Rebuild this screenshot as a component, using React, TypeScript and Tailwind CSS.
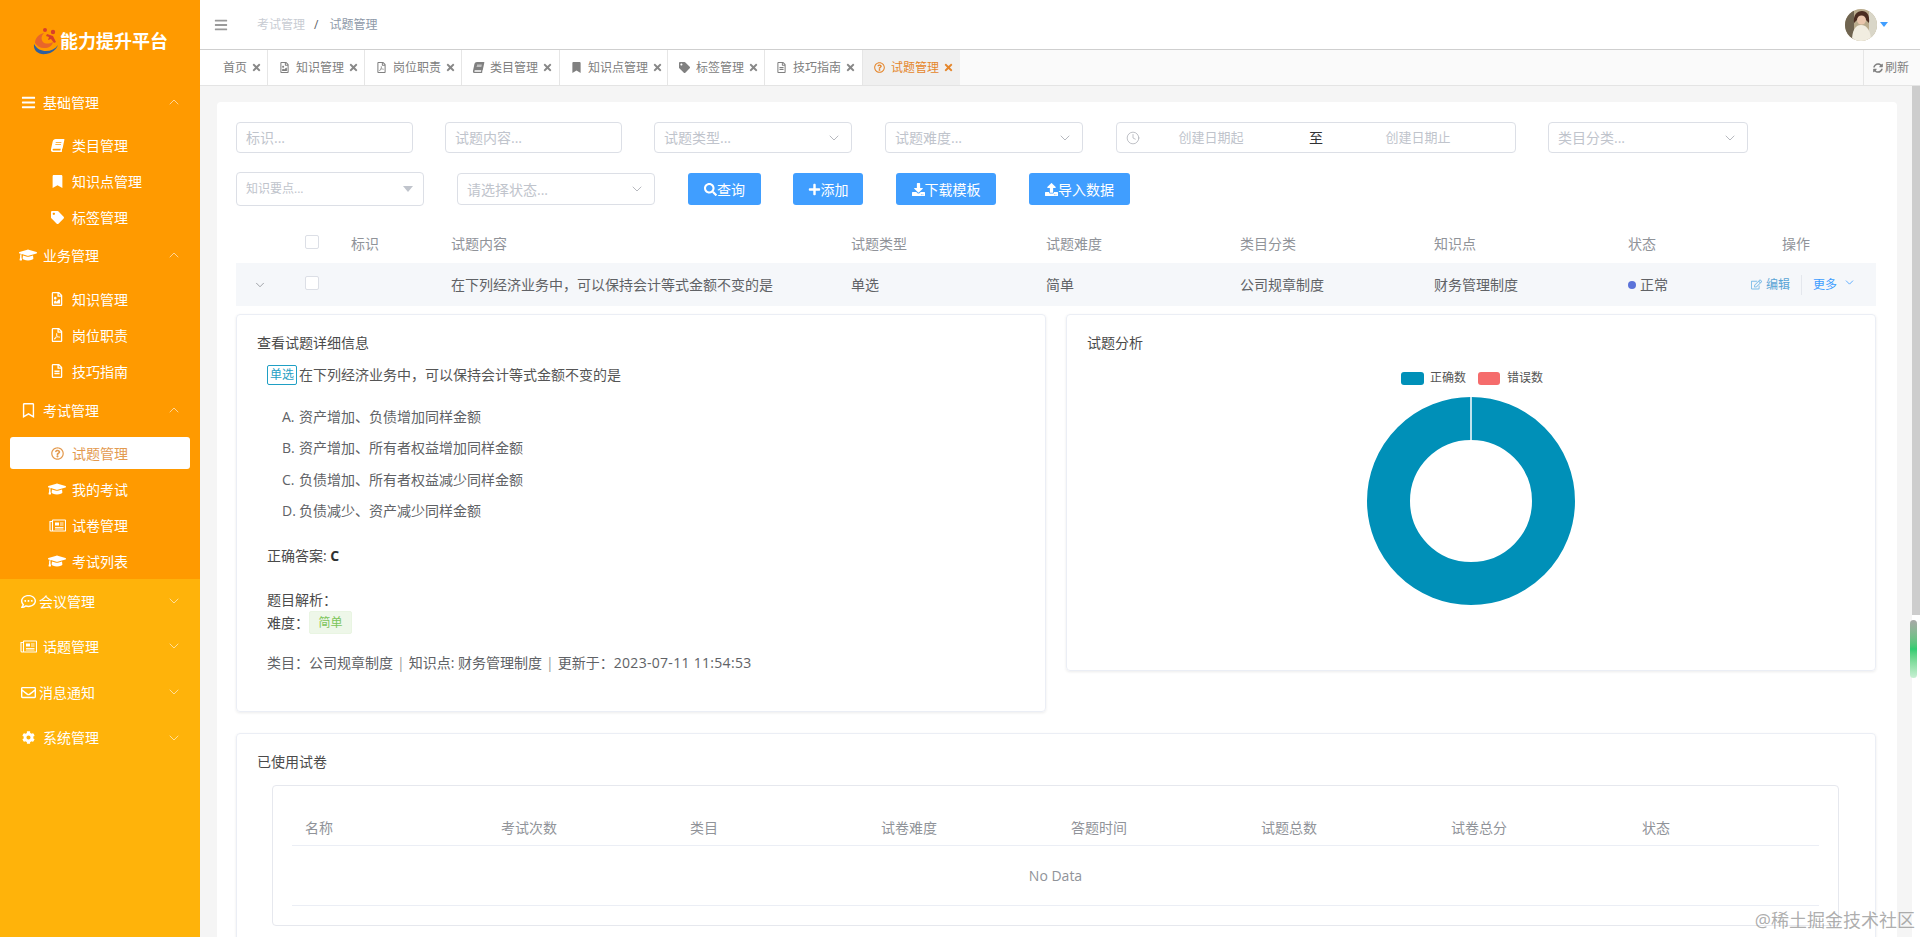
import type { ReactNode } from 'react';
import { ChevronDown, ChevronUp, Clock } from 'lucide-react';
import {
  FaBars,
  FaBook,
  FaBookmark,
  FaCog,
  FaDownload,
  FaGraduationCap,
  FaPlus,
  FaRegBookmark,
  FaRegCommentDots,
  FaRegEdit,
  FaRegEnvelope,
  FaRegFileAlt,
  FaRegFileImage,
  FaRegFilePdf,
  FaRegQuestionCircle,
  FaSearch,
  FaSyncAlt,
  FaTag,
  FaTimes,
  FaUpload,
} from 'react-icons/fa';

function PaperIcon() {
  return (
    <svg width="17" height="13" viewBox="0 0 17 13" fill="none" stroke="currentColor" strokeWidth="1.1">
      <rect x="3.5" y="1" width="13" height="11" rx="0.5" />
      <path d="M3.5 2.5H1v8.5a1 1 0 0 0 1 1h1.5" />
      <rect x="6" y="3.5" width="4" height="3" fill="currentColor" stroke="none" />
      <path d="M11 4h3.5M11 6h3.5M6 8.5h8.5M6 10h8.5" strokeWidth="0.9" />
    </svg>
  );
}

const SlantBook = () => <FaBook className="-skew-x-12" />;

const TABS = [
  { label: '首页', width: 'w-[68px]', pad: 'pl-[23px]' },
  { label: '知识管理', icon: <FaRegFileImage />, width: 'w-[97px]', pad: 'pl-[11px]' },
  { label: '岗位职责', icon: <FaRegFilePdf />, width: 'w-[97px]', pad: 'pl-[11px]' },
  { label: '类目管理', icon: <SlantBook />, width: 'w-[98px]', pad: 'pl-[11px]' },
  { label: '知识点管理', icon: <FaBookmark />, width: 'w-[108px]', pad: 'pl-[11px]' },
  { label: '标签管理', icon: <FaTag />, width: 'w-[97px]', pad: 'pl-[11px]' },
  { label: '技巧指南', icon: <FaRegFileAlt />, width: 'w-[98px]', pad: 'pl-[11px]' },
];

const PAPER_COLUMNS = [
  { label: '名称', width: 'w-[196px]' },
  { label: '考试次数', width: 'w-[189px]' },
  { label: '类目', width: 'w-[191px]' },
  { label: '试卷难度', width: 'w-[190px]' },
  { label: '答题时间', width: 'w-[190px]' },
  { label: '试题总数', width: 'w-[190px]' },
  { label: '试卷总分', width: 'w-[191px]' },
  { label: '状态', width: 'w-[150px]' },
];

function GroupHeader({ icon, label, open, tight }: { icon: ReactNode; label: string; open?: boolean; tight?: boolean }) {
  return (
    <div className="flex h-full items-center pl-[19px] pr-[18px] text-[14px] text-white">
      <span className="flex w-[18px] justify-center text-[15px]">{icon}</span>
      <span className={tight ? 'ml-[2px]' : 'ml-[6px]'}>{label}</span>
      {open ? (
        <ChevronUp className="ml-auto h-4 w-4 text-white/70" strokeWidth={1.25} />
      ) : (
        <ChevronDown className="ml-auto h-4 w-4 text-white/70" strokeWidth={1.25} />
      )}
    </div>
  );
}

function SubItem({ icon, label, active }: { icon: ReactNode; label: string; active?: boolean }) {
  return (
    <div className="flex h-[36px] items-center">
      <div
        className={`mx-[10px] flex h-[32px] w-[180px] items-center rounded-[3px] pl-[38px] text-[14px] ${
          active ? 'bg-white text-[#e39a4f]' : 'text-white'
        }`}
      >
        <span className="flex w-[18px] justify-center text-[13px]">{icon}</span>
        <span className="ml-[6px]">{label}</span>
      </div>
    </div>
  );
}

function Logo() {
  return (
    <svg width="26" height="28" viewBox="0 0 26 28" className="shrink-0">
      <path d="M1 17c-1 7 5 11 12 10 6-1 10-4 12-9-3 4-7 6-12 6-5 0-9-2-12-7z" fill="#2f5f9e" />
      <path d="M2 16c0-5 4-9 9-10-3 3-3 6-1 9 2 2 6 2 10 0-1 4-4 6-9 6-4 0-7-2-9-5z" fill="#e8662a" />
      <circle cx="12" cy="3" r="2" fill="#d8402a" />
      <circle cx="20" cy="5" r="2.2" fill="#d8402a" />
      <path d="M14 7l6 2 3 6-2 1-3-4-3 1 1-3-3-1z" fill="#d8402a" />
    </svg>
  );
}

function Sidebar() {
  const cap = <FaGraduationCap className="text-[18px]" />;

  return (
    <aside className="flex h-full w-[200px] shrink-0 flex-col bg-[#ffb30a]">
      <div className="h-[579px] bg-[#ff9a00]">
        <div className="flex h-[82px] items-center pl-[33px]">
          <Logo />
          <span className="ml-[1px] text-[18px] font-bold text-white">能力提升平台</span>
        </div>
        <div className="h-[40px]">
          <GroupHeader icon={<FaBars />} label="基础管理" open />
        </div>
        <div className="mt-[5px]">
          <SubItem icon={<SlantBook />} label="类目管理" />
          <SubItem icon={<FaBookmark />} label="知识点管理" />
          <SubItem icon={<FaTag />} label="标签管理" />
        </div>
        <div className="h-[40px]">
          <GroupHeader icon={<FaGraduationCap className="text-[18px]" />} label="业务管理" open />
        </div>
        <div className="mt-[6px]">
          <SubItem icon={<FaRegFileImage className="text-[14px]" />} label="知识管理" />
          <SubItem icon={<FaRegFilePdf className="text-[14px]" />} label="岗位职责" />
          <SubItem icon={<FaRegFileAlt className="text-[14px]" />} label="技巧指南" />
        </div>
        <div className="mt-px h-[40px]">
          <GroupHeader icon={<FaRegBookmark />} label="考试管理" open />
        </div>
        <div className="mt-[5px]">
          <SubItem icon={<FaRegQuestionCircle />} label="试题管理" active />
          <SubItem icon={cap} label="我的考试" />
          <SubItem icon={<PaperIcon />} label="试卷管理" />
          <SubItem icon={cap} label="考试列表" />
        </div>
      </div>
      <div className="h-[44px]">
        <GroupHeader icon={<FaRegCommentDots />} label="会议管理" tight />
      </div>
      <div className="h-[46px]">
        <GroupHeader icon={<PaperIcon />} label="话题管理" />
      </div>
      <div className="h-[46px]">
        <GroupHeader icon={<FaRegEnvelope />} label="消息通知" tight />
      </div>
      <div className="h-[45px]">
        <GroupHeader icon={<FaCog className="text-[13px]" />} label="系统管理" />
      </div>
    </aside>
  );
}

function Avatar() {
  return (
    <svg width="32" height="32" viewBox="0 0 32 32" className="rounded-full">
      <rect width="32" height="32" fill="#b9ab8c" />
      <rect x="0" y="0" width="9" height="32" fill="#6f6450" />
      <rect x="24" y="0" width="8" height="32" fill="#d9d6c8" />
      <path d="M9 14c-1-8 3-12 8-12s8 4 7 12l-3-3h-9z" fill="#4a2c20" />
      <circle cx="16.5" cy="11" r="4.5" fill="#e9c6ac" />
      <path d="M7 32c0-10 3-16 9-16s10 6 10 16z" fill="#f1ede0" />
    </svg>
  );
}

function TopBar() {
  return (
    <div className="flex h-[50px] shrink-0 items-center border-b border-[#cfcfcf] bg-white pl-[14px] pr-[32px]">
      <FaBars className="text-[14px] text-[#9a9a9a]" />
      <span className="ml-[29px] text-[12px] text-[#c8ccd3]">考试管理</span>
      <span className="ml-[9px] text-[12px] text-[#606266]">/</span>
      <span className="ml-[11px] text-[12px] text-[#8e99a8]">试题管理</span>
      <div className="ml-auto flex items-center">
        <Avatar />
        <span className="ml-[3px] h-0 w-0 border-x-[4px] border-t-[5px] border-x-transparent border-t-[#409eff]" />
      </div>
    </div>
  );
}

function TabBar() {
  return (
    <div className="flex h-[36px] shrink-0 items-stretch border-b border-[#e4e4e4] bg-[#fafafa] text-[12px] text-[#808080]">
      {TABS.map((tab) => (
        <div key={tab.label} className={`flex items-center border-r border-[#e6e6e6] bg-white ${tab.width} ${tab.pad}`}>
          {tab.icon && <span className="mr-[6px] text-[11px]">{tab.icon}</span>}
          <span>{tab.label}</span>
          <FaTimes className="ml-[4px] text-[11px] text-[#888888]" />
        </div>
      ))}
      <div className="flex w-[97px] items-center bg-[#f0f0f0] pl-[11px] text-[#e5862b]">
        <FaRegQuestionCircle className="mr-[6px] text-[11px]" />
        <span>试题管理</span>
        <FaTimes className="ml-[4px] text-[11px]" />
      </div>
      <div className="ml-auto flex w-[57px] items-center border-l border-[#e6e6e6] pl-[9px]">
        <FaSyncAlt className="mr-[2px] text-[10px]" />
        <span>刷新</span>
      </div>
    </div>
  );
}

function TextInput({ placeholder, width }: { placeholder: string; width: string }) {
  return (
    <div className={`flex h-[31px] items-center rounded-[4px] border border-[#dcdfe6] bg-white pl-[9px] text-[14px] text-[#c0c4cc] ${width}`}>
      {placeholder}
    </div>
  );
}

function SelectInput({ placeholder, width }: { placeholder: string; width: string }) {
  return (
    <div className={`flex h-[31px] items-center justify-between rounded-[4px] border border-[#dcdfe6] bg-white pl-[9px] pr-[9px] text-[14px] text-[#c0c4cc] ${width}`}>
      <span>{placeholder}</span>
      <ChevronDown className="h-4 w-4 text-[#a8abb2]" strokeWidth={1.25} />
    </div>
  );
}

function ActionButton({ icon, label, width }: { icon: ReactNode; label: string; width: string }) {
  return (
    <button className={`flex h-[32px] items-center justify-center rounded-[3px] bg-[#409eff] text-[14px] text-white ${width}`}>
      <span className="text-[13px]">{icon}</span>
      {label}
    </button>
  );
}

function Filters() {
  return (
    <>
      <div className="flex items-center">
        <TextInput placeholder="标识..." width="w-[177px]" />
        <div className="ml-[32px]">
          <TextInput placeholder="试题内容..." width="w-[177px]" />
        </div>
        <div className="ml-[32px]">
          <SelectInput placeholder="试题类型..." width="w-[198px]" />
        </div>
        <div className="ml-[33px]">
          <SelectInput placeholder="试题难度..." width="w-[198px]" />
        </div>
        <div className="ml-[33px] flex h-[31px] w-[400px] items-center rounded-[4px] border border-[#dcdfe6] pl-[9px] text-[13px] text-[#c0c4cc]">
          <Clock className="h-[14px] w-[14px] text-[#a8abb2]" strokeWidth={1.25} />
          <span className="ml-[6px] w-[130px] text-center">创建日期起</span>
          <span className="w-[80px] text-center text-[14px] text-[#303133]">至</span>
          <span className="w-[124px] text-center">创建日期止</span>
        </div>
        <div className="ml-[32px]">
          <SelectInput placeholder="类目分类..." width="w-[200px]" />
        </div>
      </div>
      <div className="mt-[19px] flex h-[34px] items-center">
        <div className="flex h-[34px] w-[188px] items-center justify-between rounded-[4px] border border-[#dcdfe6] pl-[9px] pr-[10px] text-[12px] text-[#c0c4cc]">
          <span>知识要点...</span>
          <span className="h-0 w-0 border-x-[5px] border-t-[6px] border-x-transparent border-t-[#c0c4cc]" />
        </div>
        <div className="ml-[33px]">
          <SelectInput placeholder="请选择状态..." width="w-[198px] h-[32px]" />
        </div>
        <div className="ml-[33px]">
          <ActionButton icon={<FaSearch />} label="查询" width="w-[73px]" />
        </div>
        <div className="ml-[32px]">
          <ActionButton icon={<FaPlus />} label="添加" width="w-[70px]" />
        </div>
        <div className="ml-[33px]">
          <ActionButton icon={<FaDownload />} label="下载模板" width="w-[100px]" />
        </div>
        <div className="ml-[33px]">
          <ActionButton icon={<FaUpload />} label="导入数据" width="w-[101px]" />
        </div>
      </div>
    </>
  );
}

function Checkbox() {
  return <span className="block h-[14px] w-[14px] rounded-[2px] border border-[#dcdfe6] bg-white" />;
}

function QuestionTable() {
  return (
    <div className="mt-[18px] w-[1640px] text-[14px]">
      <div className="flex h-[39px] items-center text-[#909399]">
        <span className="w-[68px]" />
        <span className="w-[47px] pb-[4px] pl-[1px]">
          <Checkbox />
        </span>
        <span className="w-[100px]">标识</span>
        <span className="w-[400px]">试题内容</span>
        <span className="w-[195px]">试题类型</span>
        <span className="w-[194px]">试题难度</span>
        <span className="w-[194px]">类目分类</span>
        <span className="w-[194px]">知识点</span>
        <span className="w-[88px]">状态</span>
        <span className="w-[160px] text-center">操作</span>
      </div>
      <div className="flex h-[43px] items-center bg-[#f5f7fa] text-[#606266]">
        <span className="w-[68px] pl-[17px]">
          <ChevronDown className="h-[14px] w-[14px] text-[#808389]" strokeWidth={1.25} />
        </span>
        <span className="w-[47px] pb-[3px] pl-[1px]">
          <Checkbox />
        </span>
        <span className="w-[100px]" />
        <span className="w-[400px]">在下列经济业务中，可以保持会计等式金额不变的是</span>
        <span className="w-[195px]">单选</span>
        <span className="w-[194px]">简单</span>
        <span className="w-[194px]">公司规章制度</span>
        <span className="w-[194px]">财务管理制度</span>
        <span className="flex w-[88px] items-center">
          <span className="h-[8px] w-[8px] rounded-full bg-[#5b73d9]" />
          <span className="ml-[4px]">正常</span>
        </span>
        <span className="flex items-center pl-[35px] text-[12px] text-[#409eff]">
          <FaRegEdit className="text-[11px] text-[#7fbde8]" />
          <span className="ml-[4px] text-[#5aa5d6]">编辑</span>
          <span className="mx-[11px] h-[20px] w-px bg-[#e4e7ed]" />
          <span>更多</span>
          <ChevronDown className="ml-[6px] h-[13px] w-[13px] -translate-y-[2px]" strokeWidth={1.5} />
        </span>
      </div>
    </div>
  );
}

function QuestionDetail() {
  const options = [
    ['A.', '资产增加、负债增加同样金额'],
    ['B.', '资产增加、所有者权益增加同样金额'],
    ['C.', '负债增加、所有者权益减少同样金额'],
    ['D.', '负债减少、资产减少同样金额'],
  ];

  return (
    <div className="h-[398px] w-[810px] rounded-[4px] border border-[#ebeef5] pt-[18px] text-[14px] leading-[20px] text-[#606266] shadow-[0_1px_3px_rgba(0,0,0,0.08)]">
      <div className="pl-[20px] text-[#4a4a4a]">查看试题详细信息</div>
      <div className="pl-[30px]">
        <div className="mt-[12px] flex h-[20px] items-center">
          <span className="flex h-[20px] w-[30px] items-center justify-center rounded-[2px] border border-[#1f9fc4] text-[12px] text-[#1f9fc4]">单选</span>
          <span className="ml-[2px] text-[#555555]">在下列经济业务中，可以保持会计等式金额不变的是</span>
        </div>
        <div className="mt-[16px] pl-[15px]">
          {options.map(([key, text]) => (
            <div key={key} className="flex h-[31.5px] items-center">
              <span className="w-[17px]">{key}</span>
              <span>{text}</span>
            </div>
          ))}
        </div>
        <div className="mt-[19px] text-[#4a4a4a]">
          正确答案: <b className="font-bold text-[#303133]">C</b>
        </div>
        <div className="mt-[24px] text-[#4a4a4a]">题目解析：</div>
        <div className="mt-px flex h-[23px] items-center text-[#4a4a4a]">
          <span>难度：</span>
          <span className="flex h-[23px] w-[43px] items-center justify-center rounded-[2px] border border-[#e9f5e2] bg-[#eef7e9] text-[12px] text-[#7cc55a]">简单</span>
        </div>
        <div className="mt-[19px] whitespace-pre">
          类目：公司规章制度<span className="mx-[4px] text-[#999999]">|</span>知识点: 财务管理制度<span className="mx-[4px] text-[#999999]">|</span>更新于：<span className="tracking-[0.3px]">2023-07-11 11:54:53</span>
        </div>
      </div>
    </div>
  );
}

function QuestionChart() {
  return (
    <div className="h-[357px] w-[810px] rounded-[4px] border border-[#ebeef5] pt-[18px] text-[14px] leading-[20px] text-[#4a4a4a] shadow-[0_1px_3px_rgba(0,0,0,0.08)]">
      <div className="pl-[20px]">试题分析</div>
      <div className="mt-[15px] flex h-[20px] items-center pl-[334px] text-[12px] text-[#555555]">
        <span className="h-[13px] w-[23px] rounded-[3px] bg-[#0090b8]" />
        <span className="ml-[6px]">正确数</span>
        <span className="ml-[12px] h-[13px] w-[22px] rounded-[3px] bg-[#f56c6c]" />
        <span className="ml-[7px]">错误数</span>
      </div>
      <div className="mt-[8px] pl-[299px]">
        <svg width="210" height="210" viewBox="0 0 210 210" className="block">
          <circle cx="105" cy="105" r="82.5" fill="none" stroke="#0090b8" strokeWidth="43" />
          <line x1="105" y1="0" x2="105" y2="44" stroke="#ffffff" strokeWidth="1.5" />
        </svg>
      </div>
    </div>
  );
}

function UsedPapers() {
  return (
    <div className="mt-[21px] w-[1640px] rounded-[4px] border border-[#ebeef5] pb-[30px] pt-[18px] text-[14px] shadow-[0_1px_3px_rgba(0,0,0,0.08)]">
      <div className="pl-[20px] leading-[20px] text-[#4a4a4a]">已使用试卷</div>
      <div className="ml-[35px] mt-[13px] h-[141px] w-[1567px] rounded-[4px] border border-[#e6e8ee] px-[19px] pt-[23px]">
        <div className="flex h-[37px] items-center border-b border-[#ebeef5] pl-[13px] text-[#909399]">
          {PAPER_COLUMNS.map((col) => (
            <span key={col.label} className={col.width}>{col.label}</span>
          ))}
        </div>
        <div className="flex h-[60px] items-center justify-center border-b border-[#ebeef5] text-[#909399]">No Data</div>
      </div>
    </div>
  );
}

export default function App() {
  return (
    <div className="relative flex h-[937px] w-[1920px] overflow-hidden bg-white font-['Open_Sans','Noto_Sans_CJK_SC',sans-serif]">
      <Sidebar />
      <div className="flex min-w-0 flex-1 flex-col">
        <TopBar />
        <TabBar />
        <main className="min-h-0 flex-1 overflow-hidden bg-[#f5f5f5] pl-[17px] pt-[16px]">
          <div className="w-[1680px] rounded-[4px] bg-white pl-[19px] pt-[20px]">
            <Filters />
            <QuestionTable />
            <div className="mt-[8px] flex items-start gap-[20px]">
              <QuestionDetail />
              <QuestionChart />
            </div>
            <UsedPapers />
          </div>
        </main>
      </div>
      {/* scrollbar */}
      <div className="absolute right-0 top-[86px] h-[529px] w-[8px] bg-[#cdcdcd]" />
      <div className="absolute right-0 top-[615px] h-[322px] w-[8px] bg-white" />
      <div className="absolute right-[3px] top-[620px] h-[58px] w-[7px] rounded-full bg-gradient-to-b from-[#a8a8a8] via-[#2ecc71] to-[#c8f0d4]" />
      <div className="absolute right-[5px] top-[907px] text-[18px] text-[#8a8a8a]/70">@稀土掘金技术社区</div>
    </div>
  );
}
